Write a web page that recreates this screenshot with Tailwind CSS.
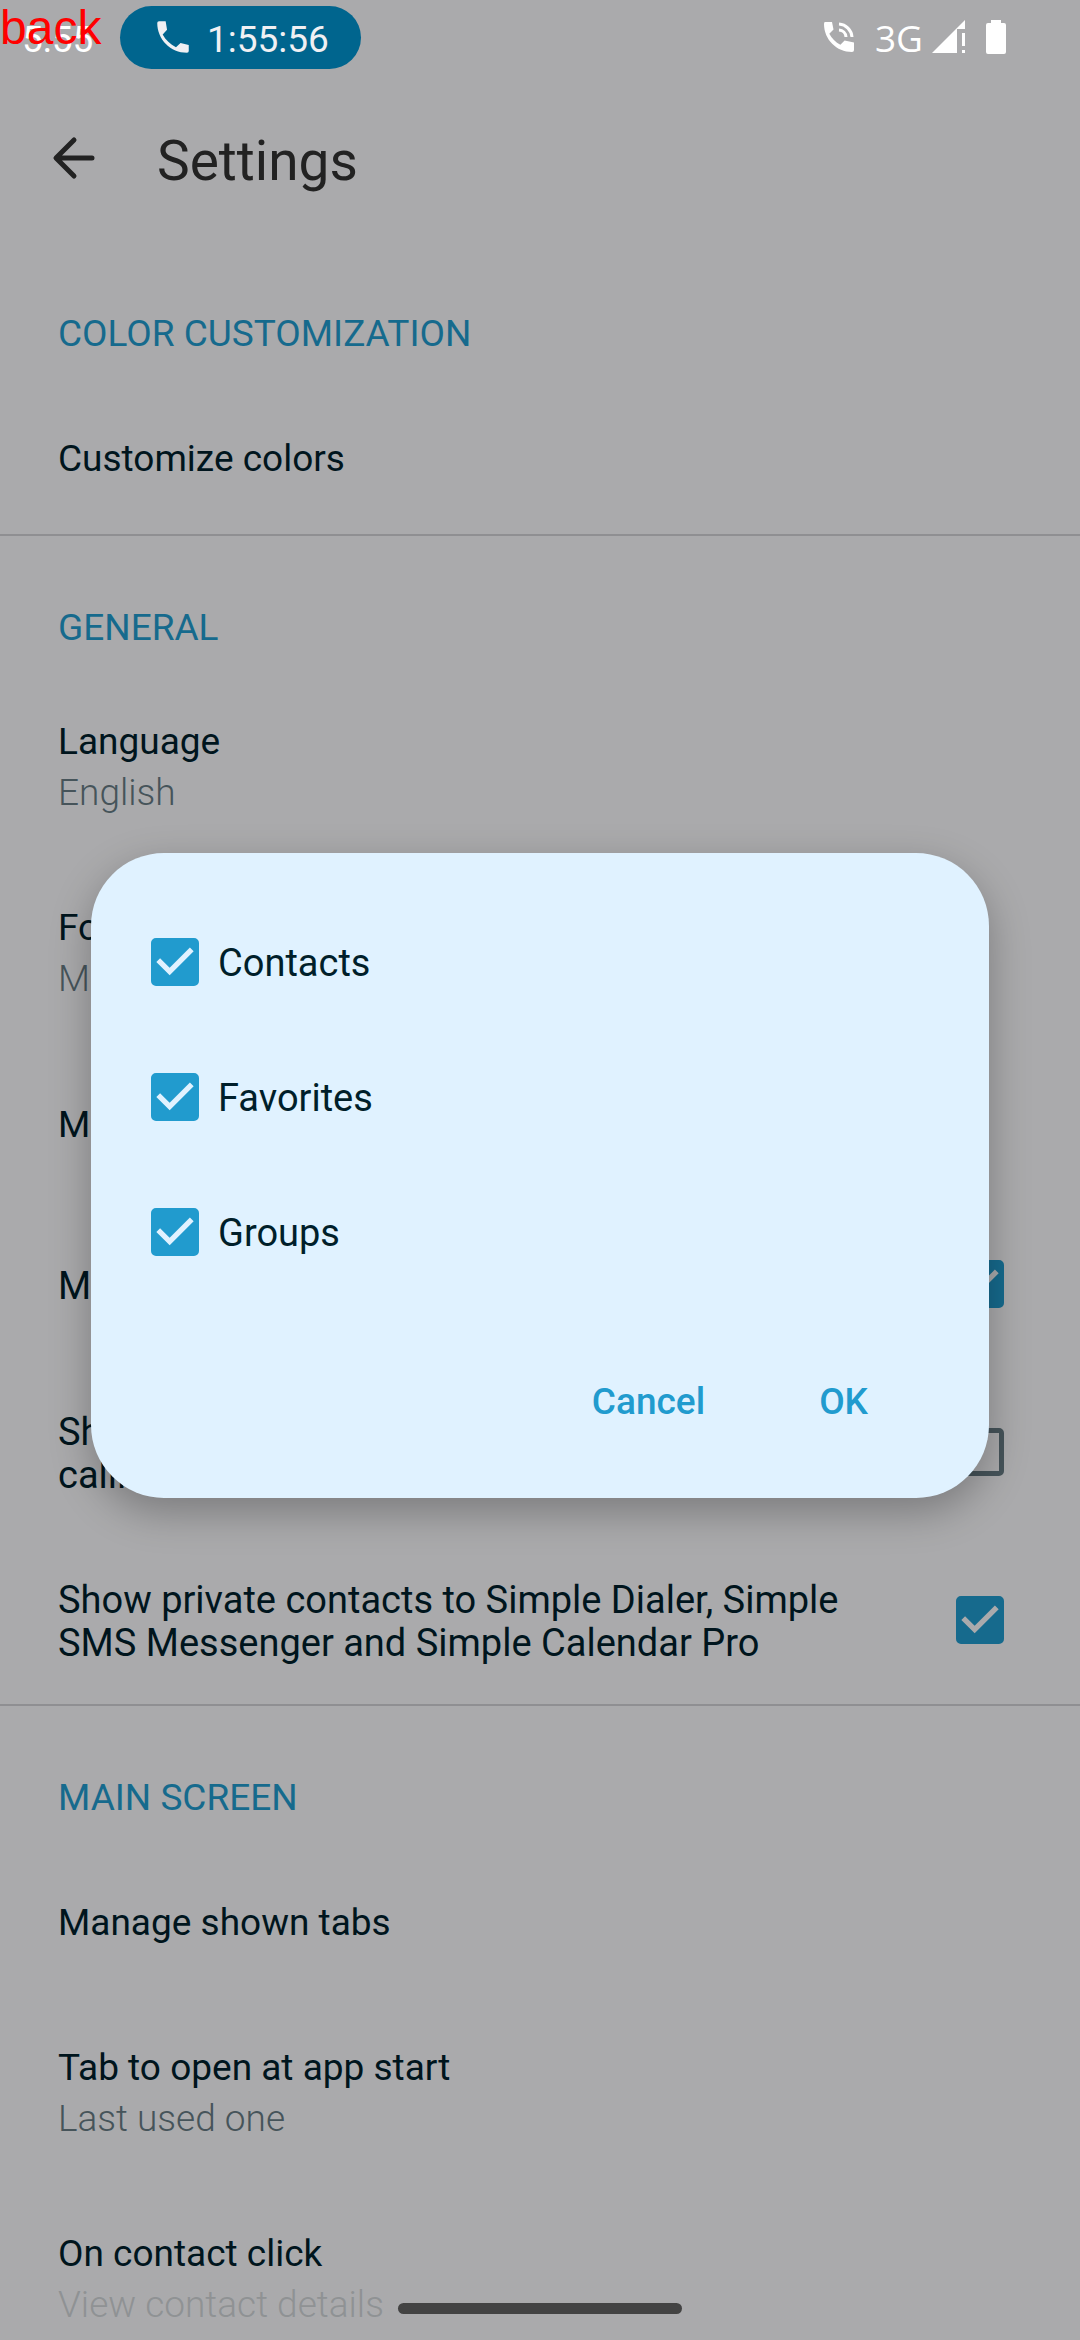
<!DOCTYPE html>
<html lang="en">
<head>
<meta charset="utf-8">
<meta name="viewport" content="width=device-width, initial-scale=1">
<title>Settings</title>
<script src="https://cdn.jsdelivr.net/npm/@tailwindcss/browser@4"></script>
</head>
<body class="bg-[#aaaaac] font-['Roboto',sans-serif] text-[37px] leading-[43px] text-[#00151d]">
<div class="relative flex h-screen flex-col overflow-hidden">

  <!-- Status bar -->
  <header class="relative flex h-[74px] shrink-0 items-center justify-between pr-[74px] pl-[22px] text-white">
    <div class="flex items-center gap-[26px]">
      <time class="w-[72px] pt-[4px]">5:55</time>
      <div class="flex h-[63px] items-center gap-[13px] rounded-full bg-[#00658e] px-[32px] text-[#f0f0f3]">
        <svg class="size-[42px]" viewBox="0 0 24 24" fill="currentColor" aria-hidden="true"><path d="M6.540 3H4a1 1 0 0 0-1 1c0 9.390 7.610 17 17 17a1 1 0 0 0 1-1v-3.500l-4.700-1.100-2.600 2.500C10.400 16.300 7.800 13.700 6.100 10.600L8.600 7.900 7.800 3z"/></svg>
        <span class="pt-[4px]">1:55:56</span>
      </div>
    </div>
    <div class="flex items-center gap-[20px]">
      <svg class="size-[32px]" viewBox="0 0 32 32" fill="currentColor" aria-hidden="true">
        <path d="M2 1h7l1.500 7.500-4.200 4.200C8.600 17.400 12.700 21.300 17.400 23.700l4.200-4.100L31 21.500V29q0 2-2 2C13.500 31 1 18.500 1 3q0-2 1-2z"/>
        <path d="M16 3a14 14 0 0 1 13 13M16 9a7.500 7.500 0 0 1 7 7" fill="none" stroke="currentColor" stroke-width="3"/>
      </svg>
      <div class="flex items-center gap-[9px]">
        <span class="font-['Open_Sans',sans-serif] font-medium">3G</span>
        <svg class="h-[34px] w-[34px]" viewBox="0 0 34 34" fill="currentColor" aria-hidden="true">
          <path d="M0 33 33 0v9h-8v24z"/><path d="M30 13h3v13h-3zM30 30h3v3h-3z"/>
        </svg>
      </div>
      <svg class="h-[34px] w-[20px]" viewBox="0 0 20 34" fill="currentColor" aria-hidden="true"><path d="M5 0h10v3h3q2 0 2 2v27q0 2-2 2H2q-2 0-2-2V5q0-2 2-2h3z"/></svg>
    </div>
    <span class="absolute top-0 left-0 font-['Liberation_Sans',sans-serif] text-[48px] leading-[55px] text-[#ff0000]">back</span>
  </header>

  <!-- Toolbar -->
  <div class="flex h-[168px] shrink-0 items-start gap-[59px] px-[50px] pt-[55px]">
    <button type="button" aria-label="Back" class="mt-[5px] size-[48px] text-[#222]">
      <svg class="size-[48px]" viewBox="0 0 48 48" fill="none" stroke="currentColor" stroke-width="5" stroke-linecap="round" stroke-linejoin="round" aria-hidden="true"><path d="M42 24H7M24 6 6 24l18 18"/></svg>
    </button>
    <h1 class="text-[55px] leading-[64px] text-[#222]">Settings</h1>
  </div>

  <main class="flex shrink-0 flex-col">
    <section class="flex flex-col border-b-2 border-[#8f8f92]">
      <h2 class="px-[58px] pb-[24px] pt-[70px] text-[#166a8d]">COLOR CUSTOMIZATION</h2>
      <div class="px-[58px] pt-[58px] pb-[54px]">Customize colors</div>
    </section>

    <section class="flex flex-col border-b-2 border-[#8f8f92]">
      <h2 class="px-[58px] pb-[24px] pt-[70px] text-[#166a8d]">GENERAL</h2>
      <div class="flex flex-col gap-[8px] px-[58px] pt-[47px] pb-[45px]"><span>Language</span><span class="font-light text-[#46545a]">English</span></div>
      <div class="flex flex-col gap-[8px] px-[58px] pt-[47px] pb-[45px]"><span>Font size</span><span class="font-light text-[#46545a]">Medium</span></div>
      <div class="px-[58px] pt-[58px] pb-[54px]">Manage shown contact fields</div>
      <label class="flex h-[168px] items-center justify-between pr-[76px] pl-[58px] text-[38px] leading-[43px]">
        <span class="pt-[4px]">Merge duplicate contacts</span>
        <span class="grid size-[48px]">
          <input type="checkbox" checked class="peer col-start-1 row-start-1 size-[48px] appearance-none rounded-[5px] border-[5px] border-[#46545a] checked:border-[#166a8d] checked:bg-[#166a8d]">
          <svg class="pointer-events-none invisible col-start-1 row-start-1 size-[48px] text-[#aaaaac] peer-checked:visible" viewBox="3 3 18 18" fill="currentColor" aria-hidden="true"><path d="m10 17-5-5 1.410-1.410L10 14.170l7.590-7.590L19 8z"/></svg>
        </span>
      </label>
      <label class="flex h-[168px] items-center justify-between pr-[76px] pl-[58px] text-[38px] leading-[43px]">
        <span class="pt-[4px]">Show a dialog with number before<br>calling</span>
        <span class="grid size-[48px]">
          <input type="checkbox" class="peer col-start-1 row-start-1 size-[48px] appearance-none rounded-[5px] border-[5px] border-[#46545a] checked:border-[#166a8d] checked:bg-[#166a8d]">
          <svg class="pointer-events-none invisible col-start-1 row-start-1 size-[48px] text-[#aaaaac] peer-checked:visible" viewBox="3 3 18 18" fill="currentColor" aria-hidden="true"><path d="m10 17-5-5 1.410-1.410L10 14.170l7.590-7.590L19 8z"/></svg>
        </span>
      </label>
      <label class="flex h-[168px] items-center justify-between pr-[76px] pl-[58px] text-[38px] leading-[43px]">
        <span class="pt-[4px]">Show private contacts to Simple Dialer, Simple<br>SMS Messenger and Simple Calendar Pro</span>
        <span class="grid size-[48px]">
          <input type="checkbox" checked class="peer col-start-1 row-start-1 size-[48px] appearance-none rounded-[5px] border-[5px] border-[#46545a] checked:border-[#166a8d] checked:bg-[#166a8d]">
          <svg class="pointer-events-none invisible col-start-1 row-start-1 size-[48px] text-[#aaaaac] peer-checked:visible" viewBox="3 3 18 18" fill="currentColor" aria-hidden="true"><path d="m10 17-5-5 1.410-1.410L10 14.170l7.590-7.590L19 8z"/></svg>
        </span>
      </label>
    </section>

    <section class="flex flex-col">
      <h2 class="px-[58px] pb-[24px] pt-[70px] text-[#166a8d]">MAIN SCREEN</h2>
      <div class="px-[58px] pt-[58px] pb-[54px]">Manage shown tabs</div>
      <div class="flex flex-col gap-[8px] px-[58px] pt-[48px] pb-[44px]"><span>Tab to open at app start</span><span class="font-light text-[#46545a]">Last used one</span></div>
      <div class="flex flex-col gap-[8px] px-[58px] pt-[48px] pb-[44px]"><span>On contact click</span><span class="font-light text-[#8f9294]">View contact details</span></div>
    </section>
  </main>

  <!-- Tab picker dialog -->
  <div class="absolute inset-0 flex items-center px-[91px] pt-[11px]">
    <form role="dialog" aria-label="Manage shown tabs" class="flex w-full flex-col rounded-[73px] bg-[#e0f2ff] px-[60px] pt-[41px] pb-[56px] text-[38px] leading-[43px] text-[#001f2a] shadow-[0_14px_40px_rgba(0,0,0,0.28)]">
      <label class="flex h-[135px] items-center gap-[19px]">
        <span class="grid size-[48px]">
          <input type="checkbox" checked class="peer col-start-1 row-start-1 size-[48px] appearance-none rounded-[5px] border-[5px] border-[#46545a] checked:border-[#219bce] checked:bg-[#219bce]">
          <svg class="pointer-events-none invisible col-start-1 row-start-1 size-[48px] text-[#e0f2ff] peer-checked:visible" viewBox="3 3 18 18" fill="currentColor" aria-hidden="true"><path d="m10 17-5-5 1.410-1.410L10 14.170l7.590-7.590L19 8z"/></svg>
        </span>
        <span class="pt-[4px]">Contacts</span>
      </label>
      <label class="flex h-[135px] items-center gap-[19px]">
        <span class="grid size-[48px]">
          <input type="checkbox" checked class="peer col-start-1 row-start-1 size-[48px] appearance-none rounded-[5px] border-[5px] border-[#46545a] checked:border-[#219bce] checked:bg-[#219bce]">
          <svg class="pointer-events-none invisible col-start-1 row-start-1 size-[48px] text-[#e0f2ff] peer-checked:visible" viewBox="3 3 18 18" fill="currentColor" aria-hidden="true"><path d="m10 17-5-5 1.410-1.410L10 14.170l7.590-7.590L19 8z"/></svg>
        </span>
        <span class="pt-[4px]">Favorites</span>
      </label>
      <label class="flex h-[135px] items-center gap-[19px]">
        <span class="grid size-[48px]">
          <input type="checkbox" checked class="peer col-start-1 row-start-1 size-[48px] appearance-none rounded-[5px] border-[5px] border-[#46545a] checked:border-[#219bce] checked:bg-[#219bce]">
          <svg class="pointer-events-none invisible col-start-1 row-start-1 size-[48px] text-[#e0f2ff] peer-checked:visible" viewBox="3 3 18 18" fill="currentColor" aria-hidden="true"><path d="m10 17-5-5 1.410-1.410L10 14.170l7.590-7.590L19 8z"/></svg>
        </span>
        <span class="pt-[4px]">Groups</span>
      </label>
      <div class="mt-[60px] flex justify-end gap-[20px] pr-[14px] text-[37px] leading-[43px] font-medium text-[#219bce]">
        <button type="button" class="px-[47px] pt-[21px] pb-[19px]">Cancel</button>
        <button type="submit" class="px-[47px] pt-[21px] pb-[19px]">OK</button>
      </div>
    </form>
  </div>

  <!-- Gesture handle -->
  <div class="absolute inset-x-0 bottom-[26px] flex justify-center"><div class="h-[11px] w-[284px] rounded-full bg-[#434343]"></div></div>
</div>
</body>
</html>
